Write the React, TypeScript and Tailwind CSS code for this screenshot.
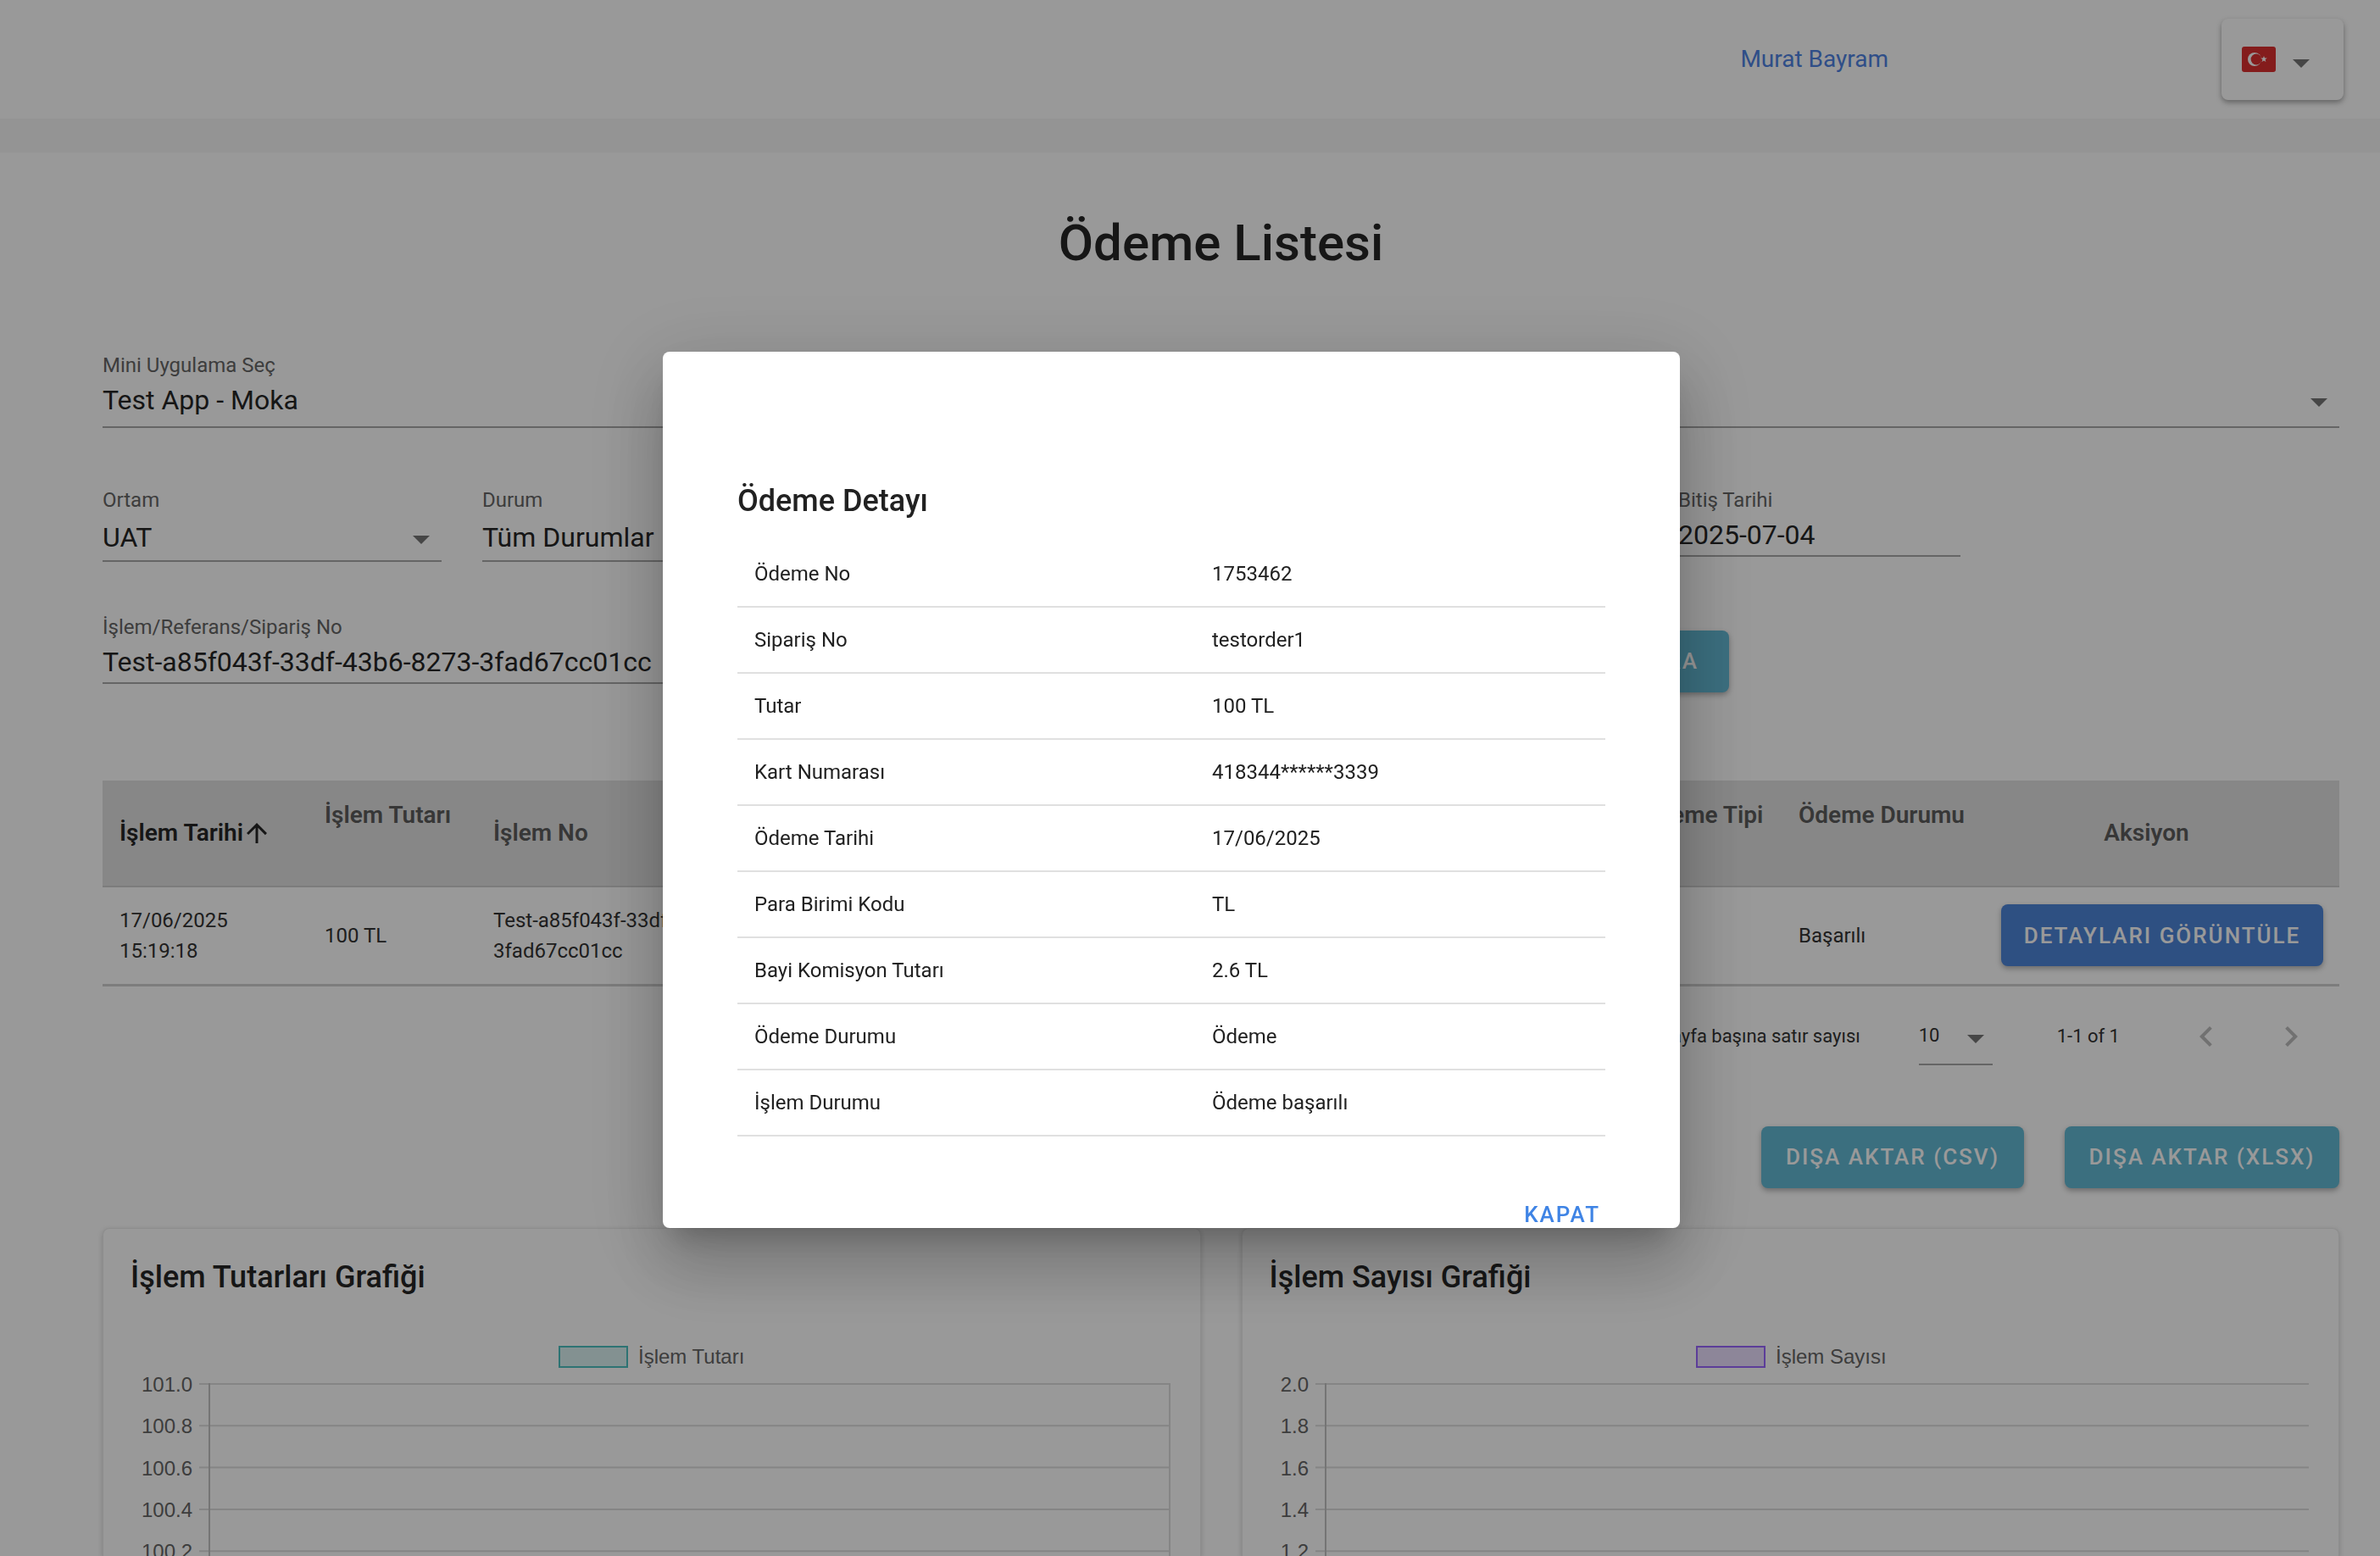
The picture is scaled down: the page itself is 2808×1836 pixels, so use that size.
import React from "react";

const Caret = ({ className = "" }: { className?: string }) => (
  <svg viewBox="0 0 24 24" className={`w-12 h-12 fill-[#757575] ${className}`}>
    <path d="M7 10l5 5 5-5z" />
  </svg>
);

const Field = ({
  label,
  value,
  className = "",
  gap = "mt-[7px]",
  pb = "pb-[4px]",
  caret = false,
}: {
  label: string;
  value: string;
  className?: string;
  gap?: string;
  pb?: string;
  caret?: boolean;
}) => (
  <div className={className}>
    <div className="text-[24px] leading-[28px] text-[#666666] whitespace-nowrap">{label}</div>
    <div className={`${gap} ${pb} relative border-b-2 border-[#a8a8a8] text-[32px] leading-[40px] text-[#262626] whitespace-nowrap overflow-hidden`}>
      {value}
      {caret && <Caret className="absolute right-0 top-[-2px]" />}
    </div>
  </div>
);

const HeadCell = ({ children, dim = true, pad = "pl-5" }: { children: React.ReactNode; dim?: boolean; pad?: string }) => (
  <th className={`${pad} text-left align-middle font-semibold text-[28px] leading-[42px] ${dim ? "text-[#5c5c5c]" : "text-[#262626]"}`}>
    {children}
  </th>
);

const SortHead = ({ children }: { children: string }) => (
  <>
    <div>{children}</div>
    <div className="h-[42px]" />
  </>
);

const detailRows: [string, string][] = [
  ["Ödeme No", "1753462"],
  ["Sipariş No", "testorder1"],
  ["Tutar", "100 TL"],
  ["Kart Numarası", "418344******3339"],
  ["Ödeme Tarihi", "17/06/2025"],
  ["Para Birimi Kodu", "TL"],
  ["Bayi Komisyon Tutarı", "2.6 TL"],
  ["Ödeme Durumu", "Ödeme"],
  ["İşlem Durumu", "Ödeme başarılı"],
];

const Chart = ({
  legend,
  stroke,
  fill,
  legendX,
  axisX,
  labelX,
  labels,
  rightEdge,
}: {
  legend: string;
  stroke: string;
  fill: string;
  legendX: number;
  axisX: number;
  labelX: number;
  labels: string[];
  rightEdge: boolean;
}) => {
  const ys = [62, 111.3, 160.6, 210, 259.3];
  const font = { fontFamily: "'Liberation Sans', Arial, sans-serif", fontSize: 24 };
  return (
    <svg width="1295" height="266" className="mt-[42px] block overflow-hidden">
      <rect x={legendX} y={18} width={80} height={24} fill={fill} stroke={stroke} strokeWidth={2} />
      <text x={legendX + 93} y={38} fill="#666666" style={font}>
        {legend}
      </text>
      {ys.map((y, i) => (
        <g key={i}>
          <line x1={axisX - 12} x2={1258} y1={y} y2={y} stroke="#dedede" strokeWidth={2} />
          <text x={labelX} y={y + 9} textAnchor="end" fill="#666666" style={font}>
            {labels[i]}
          </text>
        </g>
      ))}
      <line x1={axisX} x2={axisX} y1={61} y2={266} stroke="#c4c4c4" strokeWidth={2} />
      {rightEdge && <line x1={1258} x2={1258} y1={61} y2={266} stroke="#dedede" strokeWidth={2} />}
    </svg>
  );
};

const Card = ({ title, children }: { title: string; children: React.ReactNode }) => (
  <div className="flex-1 h-[388px] rounded-t-[8px] bg-white border border-b-0 border-[#ececec] shadow-[0_2px_6px_rgba(0,0,0,0.18)] overflow-hidden">
    <div className="pt-[35px] pl-[32px] text-[36px] leading-[44px] font-medium text-[#262626]">{title}</div>
    {children}
  </div>
);

export default function App() {
  return (
    <div className="relative w-[2808px] h-[1836px] overflow-hidden bg-white [font-family:Roboto,sans-serif]">
      <header className="h-[140px] flex items-center justify-end pr-[43px]">
        <span className="text-[28px] text-[#4f83e3] mr-[393px]">Murat Bayram</span>
        <div className="w-[144px] h-[96px] rounded-[8px] bg-white shadow-[0_3px_6px_rgba(0,0,0,0.35)] flex items-center pl-[24px]">
          <svg width="40" height="30" viewBox="0 0 40 30" className="block">
            <rect width="40" height="30" rx="3" fill="#dc3030" />
            <circle cx="15" cy="15" r="8" fill="#ffffff" />
            <circle cx="17" cy="15" r="6.4" fill="#dc3030" />
            <polygon fill="#ffffff" points="26,11 27,13.6 29.8,13.6 27.6,15.3 28.4,18 26,16.4 23.6,18 24.4,15.3 22.2,13.6 25,13.6" />
          </svg>
          <Caret className="ml-[6px] mt-[8px] -mr-2" />
        </div>
      </header>
      <div className="h-[40px] bg-[#f7f7f7]" />

      <main className="pl-[121px] pr-[48px]">
        <h1 className="mt-[71px] h-[72px] text-center text-[60px] leading-[72px] font-medium text-[#262626]">Ödeme Listesi</h1>

        <Field label="Mini Uygulama Seç" value="Test App - Moka" className="mt-[94px]" pb="pb-[11px]" caret />

        <div className="mt-[71px] flex h-[87px]">
          <Field label="Ortam" value="UAT" className="w-[400px]" gap="mt-[10px]" pb="pb-[7px]" caret />
          <Field label="Durum" value="Tüm Durumlar" className="w-[400px] ml-[48px]" gap="mt-[10px]" pb="pb-[7px]" caret />
          <Field label="Bitiş Tarihi" value="2025-07-04" className="w-[333px] ml-auto mr-[447px]" />
        </div>

        <div className="mt-[63px] flex items-start w-[1919px]">
          <Field label="İşlem/Referans/Sipariş No" value="Test-a85f043f-33df-43b6-8273-3fad67cc01cc" className="flex-1" />
          <button className="mt-[18px] ml-[48px] w-[150px] h-[73px] pr-[36px] text-right rounded-[8px] bg-[#63b9d4] text-white text-[26px] font-medium tracking-[2px] shadow-[0_3px_6px_rgba(0,0,0,0.3)]">
            ARA
          </button>
        </div>

        <table className="mt-[104px] w-full table-fixed border-collapse">
          <colgroup>
            <col className="w-[242px]" />
            <col className="w-[199px]" />
            <col className="w-[418px]" />
            <col className="w-[937px]" />
            <col className="w-[185px]" />
            <col className="w-[239px]" />
            <col className="w-[419px]" />
          </colgroup>
          <thead>
            <tr className="h-[125px] bg-[#e2e2e2] border-b-2 border-[#cfcfcf]">
              <HeadCell dim={false}>
                <span className="inline-flex items-center">
                  İşlem Tarihi
                  <svg viewBox="0 0 24 24" className="w-9 h-9 fill-[#262626] ml-[-2px]">
                    <path d="M4 12l1.41 1.41L11 7.83V20h2V7.83l5.58 5.59L20 12l-8-8-8 8z" />
                  </svg>
                </span>
              </HeadCell>
              <HeadCell><SortHead>İşlem Tutarı</SortHead></HeadCell>
              <HeadCell>İşlem No</HeadCell>
              <HeadCell>{""}</HeadCell>
              <HeadCell><SortHead>Ödeme Tipi</SortHead></HeadCell>
              <HeadCell><SortHead>Ödeme Durumu</SortHead></HeadCell>
              <th className="pr-[36px] text-center align-middle font-semibold text-[28px] leading-[42px] text-[#5c5c5c]">Aksiyon</th>
            </tr>
          </thead>
          <tbody>
            <tr className="h-[116px] border-b-[3px] border-[#d0d0d0] text-[24px] leading-[36px] text-[#333333]">
              <td className="pl-5 align-middle">17/06/2025<br />15:19:18</td>
              <td className="pl-5 align-middle">100 TL</td>
              <td className="pl-5 align-middle break-all">Test-a85f043f-33df-43b6-8273-<br />3fad67cc01cc</td>
              <td />
              <td />
              <td className="pl-5 align-middle">Başarılı</td>
              <td className="px-5 align-middle">
                <button className="w-[380px] h-[73px] rounded-[8px] bg-[#4d85d9] text-white text-[26px] font-medium tracking-[2px] shadow-[0_3px_6px_rgba(0,0,0,0.3)]">
                  DETAYLARI GÖRÜNTÜLE
                </button>
              </td>
            </tr>
          </tbody>
        </table>

        <div className="mt-[25px] h-[68px] flex items-center justify-end pr-[33px] text-[22px] text-[#333333]">
          <span>Sayfa başına satır sayısı</span>
          <div className="ml-[69px] w-[87px] h-full border-b-2 border-[#a8a8a8] flex items-center relative">
            10
            <Caret className="absolute right-[-4px] top-[12px]" />
          </div>
          <span className="ml-[76px]">1-1 of 1</span>
          <svg viewBox="0 0 24 24" className="w-12 h-12 fill-[#bdbdbd] ml-[78px]">
            <path d="M15.41 16.59L10.83 12l4.58-4.59L14 6l-6 6 6 6 1.41-1.41z" />
          </svg>
          <svg viewBox="0 0 24 24" className="w-12 h-12 fill-[#bdbdbd] ml-[52px]">
            <path d="M8.59 16.59L13.17 12 8.59 7.41 10 6l6 6-6 6-1.41-1.41z" />
          </svg>
        </div>

        <div className="mt-[72px] flex justify-end gap-[48px]">
          <button className="w-[310px] h-[73px] rounded-[8px] bg-[#63b9d4] text-white text-[26px] font-medium tracking-[2px] shadow-[0_3px_6px_rgba(0,0,0,0.3)]">
            DIŞA AKTAR (CSV)
          </button>
          <button className="w-[324px] h-[73px] rounded-[8px] bg-[#63b9d4] text-white text-[26px] font-medium tracking-[2px] shadow-[0_3px_6px_rgba(0,0,0,0.3)]">
            DIŞA AKTAR (XLSX)
          </button>
        </div>

        <div className="mt-[47px] flex gap-[48px]">
          <Card title="İşlem Tutarları Grafiği">
            <Chart legend="İşlem Tutarı" stroke="#4bc0c0" fill="rgba(75,192,192,0.2)" legendX={538} axisX={125} labelX={105} rightEdge
              labels={["101.0", "100.8", "100.6", "100.4", "100.2"]} />
          </Card>
          <Card title="İşlem Sayısı Grafiği">
            <Chart legend="İşlem Sayısı" stroke="#9966ff" fill="rgba(153,102,255,0.2)" legendX={536} axisX={98} labelX={78} rightEdge={false}
              labels={["2.0", "1.8", "1.6", "1.4", "1.2"]} />
          </Card>
        </div>
      </main>

      <div className="fixed inset-0 bg-black/40">
        <div className="absolute left-[782px] top-[415px] w-[1200px] h-[1034px] rounded-[8px] bg-white px-[88px] shadow-[0_22px_30px_-14px_rgba(0,0,0,0.2),0_48px_76px_6px_rgba(0,0,0,0.14),0_18px_92px_16px_rgba(0,0,0,0.12)]">
          <h2 className="mt-[77px] pt-[77px] -mt-0 text-[36px] leading-[44px] font-medium text-[#212121]">Ödeme Detayı</h2>
          <div className="mt-[26px]">
            {detailRows.map(([k, v]) => (
              <div key={k} className="h-[78px] grid grid-cols-[560px_1fr] items-center pl-5 border-b-2 border-[#e0e0e0] text-[24px] text-[#212121]">
                <span>{k}</span>
                <span className="-ml-5">{v}</span>
              </div>
            ))}
          </div>
          <div className="mt-[72px] flex justify-end pr-[6px]">
            <button className="text-[26px] leading-[40px] font-medium tracking-[2px] text-[#3f84e5]">KAPAT</button>
          </div>
        </div>
      </div>
    </div>
  );
}
